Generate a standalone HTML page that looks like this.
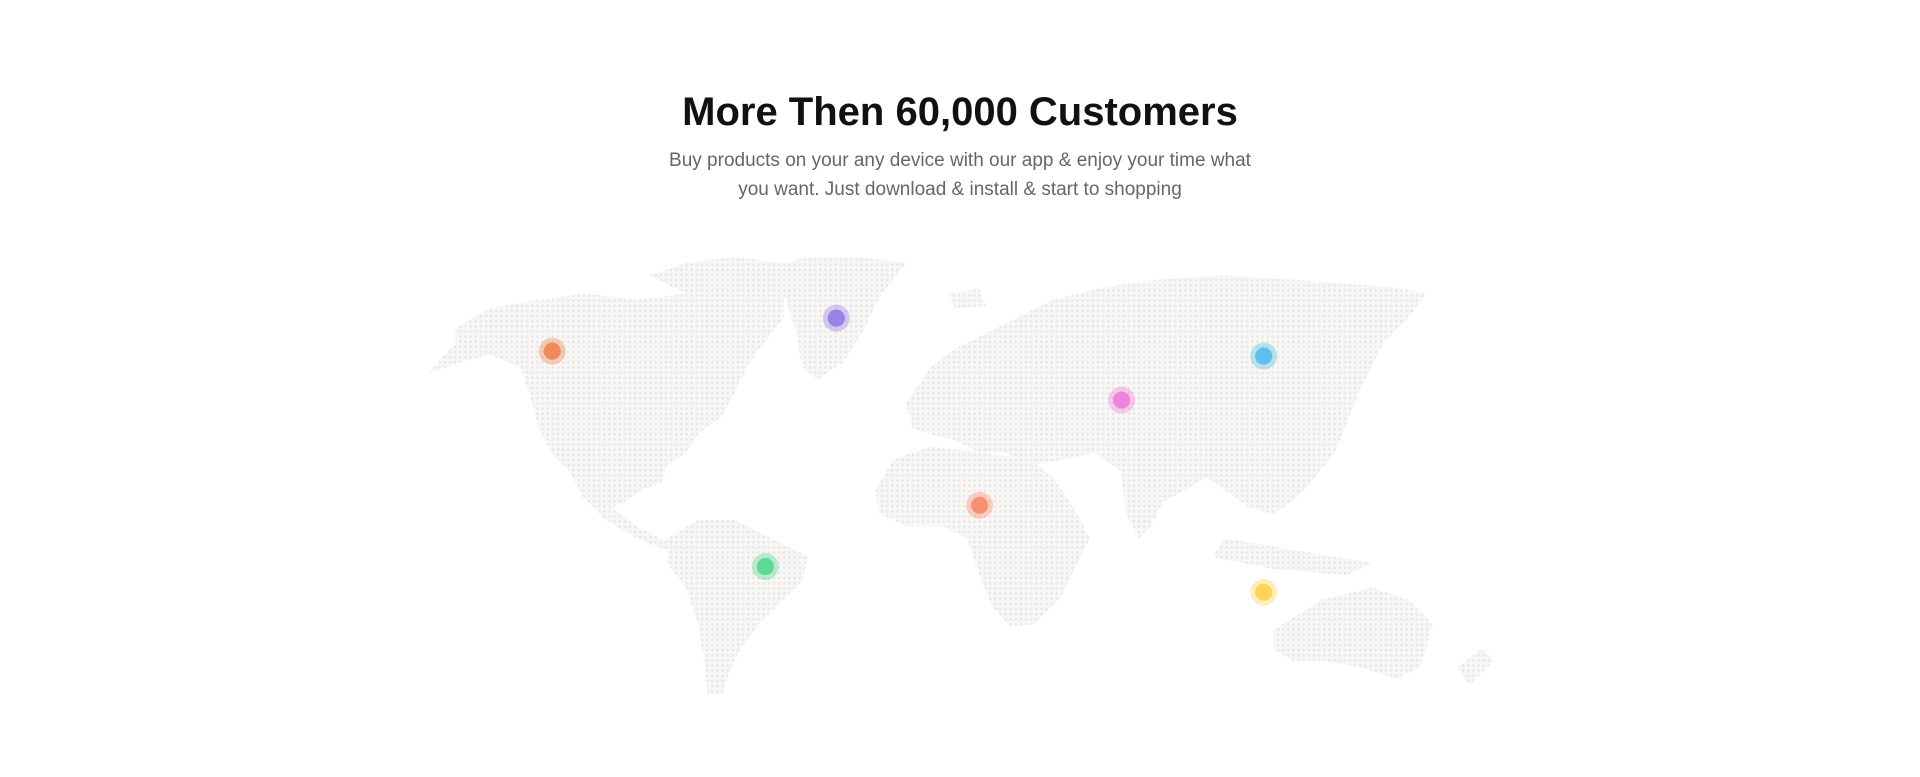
<!DOCTYPE html>
<html><head><meta charset="utf-8"><style>
html,body{margin:0;padding:0;background:#fff;width:1920px;height:777px;overflow:hidden;position:relative;font-family:"Liberation Sans",sans-serif}
h1{position:absolute;top:84px;left:0;width:1920px;text-align:center;margin:0;font-size:40px;font-weight:700;color:#111;line-height:56px}
p{position:absolute;top:146px;left:0;width:1920px;text-align:center;margin:0;font-size:19px;line-height:29px;color:#666}
svg{position:absolute;left:0;top:0}
</style></head><body>
<h1>More Then 60,000 Customers</h1>
<p>Buy products on your any device with our app &amp; enjoy your time what<br>you want. Just download &amp; install &amp; start to shopping</p>
<svg width="1920" height="777" viewBox="0 0 1568 635" preserveAspectRatio="none">
<defs><pattern id="d" width="4.2" height="4.2" patternUnits="userSpaceOnUse"><rect width="4.2" height="4.2" fill="#f8f7f5"/><circle cx="2.1" cy="2.1" r="1.1" fill="#e9e7e2"/></pattern></defs>
<g fill="url(#d)">
<polygon points="372,268 400,252 440,245 480,240 520,245 560,240 600,230 640,232 640,260 620,285 610,300 600,320 590,340 570,355 560,370 545,380 540,395 525,400 510,410 500,415 520,430 540,440 555,445 545,450 520,440 495,425 475,405 465,385 450,370 440,350 432,320 425,300 400,290 380,295 350,305 372,280"/>
<polygon points="530,225 560,215 600,210 640,215 650,230 610,235 560,240"/>
<polygon points="625,220 660,210 700,210 740,215 720,240 705,270 690,295 668,310 655,300 650,270 640,240"/>
<polygon points="545,440 570,425 600,425 630,440 660,455 655,475 640,490 620,510 605,530 595,550 590,568 578,568 575,540 570,510 560,480 545,460"/>
<polygon points="740,330 760,300 780,285 800,275 830,260 860,245 900,235 950,228 1000,225 1050,228 1100,232 1140,235 1165,240 1150,260 1130,280 1120,300 1110,320 1100,345 1090,370 1070,395 1055,410 1040,420 1020,415 1000,400 985,390 960,405 940,415 925,410 915,385 895,370 870,375 845,380 820,370 800,370 780,360 760,355 745,350"/>
<polygon points="715,400 730,375 760,365 800,370 840,375 860,390 880,420 890,440 875,470 865,490 845,510 825,512 810,495 800,470 790,440 770,430 740,430 718,420"/>
<polygon points="915,385 940,395 950,410 940,430 930,440 920,420"/>
<polygon points="1000,440 1060,450 1120,460 1100,470 1040,465 990,455"/>
<polygon points="1040,515 1080,490 1120,480 1150,490 1170,510 1160,545 1140,555 1110,545 1080,540 1055,540 1040,530"/>
<polygon points="1190,545 1210,530 1220,540 1200,560"/>
<polygon points="775,240 800,236 805,250 780,252"/>
</g>
<g>
<circle cx="451" cy="287" r="11" fill="#f08a5d" opacity=".4"/><circle cx="451" cy="287" r="7" fill="#f08a5d"/>
<circle cx="683" cy="260" r="11" fill="#9b82e6" opacity=".4"/><circle cx="683" cy="260" r="7" fill="#9b82e6"/>
<circle cx="625" cy="463" r="11" fill="#5fd996" opacity=".4"/><circle cx="625" cy="463" r="7" fill="#5fd996"/>
<circle cx="800" cy="413" r="11" fill="#f69072" opacity=".4"/><circle cx="800" cy="413" r="7" fill="#f69072"/>
<circle cx="916" cy="327" r="11" fill="#ee83e0" opacity=".4"/><circle cx="916" cy="327" r="7" fill="#ee83e0"/>
<circle cx="1032" cy="291" r="11" fill="#5ec0ec" opacity=".4"/><circle cx="1032" cy="291" r="7" fill="#5ec0ec"/>
<circle cx="1032" cy="484" r="11" fill="#fdd45a" opacity=".4"/><circle cx="1032" cy="484" r="7" fill="#fdd45a"/>
</g>
</svg>
</body></html>
